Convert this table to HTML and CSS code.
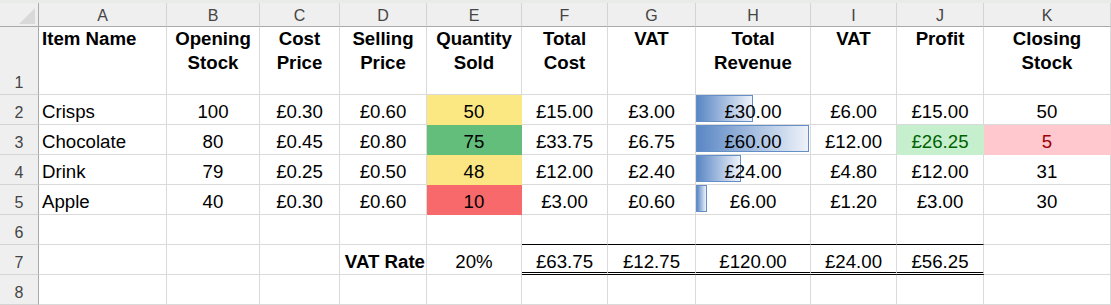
FILE: index.html
```html
<!DOCTYPE html>
<html>
<head>
<meta charset="utf-8">
<link rel="stylesheet" href="styles.css">
</head>
<body>
<div class="strip"></div>
<div class="sheet">
  <div class="corner"><span class="tri"></span></div>
  <div class="ch">A</div><div class="ch">B</div><div class="ch">C</div><div class="ch">D</div><div class="ch">E</div><div class="ch">F</div><div class="ch">G</div><div class="ch">H</div><div class="ch">I</div><div class="ch">J</div><div class="ch last">K</div>

  <div class="rh">1</div>
  <div class="c hd left">Item Name</div>
  <div class="c hd">Opening<br>Stock</div>
  <div class="c hd">Cost<br>Price</div>
  <div class="c hd">Selling<br>Price</div>
  <div class="c hd">Quantity<br>Sold</div>
  <div class="c hd">Total<br>Cost</div>
  <div class="c hd">VAT</div>
  <div class="c hd">Total<br>Revenue</div>
  <div class="c hd">VAT</div>
  <div class="c hd">Profit</div>
  <div class="c hd">Closing<br>Stock</div>

  <div class="rh">2</div>
  <div class="c left">Crisps</div>
  <div class="c">100</div>
  <div class="c">£0.30</div>
  <div class="c">£0.60</div>
  <div class="c yellow">50</div>
  <div class="c">£15.00</div>
  <div class="c">£3.00</div>
  <div class="c barcell"><span class="bar" style="width:57px"></span><span class="val">£30.00</span></div>
  <div class="c">£6.00</div>
  <div class="c">£15.00</div>
  <div class="c">50</div>

  <div class="rh">3</div>
  <div class="c left">Chocolate</div>
  <div class="c">80</div>
  <div class="c">£0.45</div>
  <div class="c">£0.80</div>
  <div class="c green">75</div>
  <div class="c">£33.75</div>
  <div class="c">£6.75</div>
  <div class="c barcell"><span class="bar" style="width:113px"></span><span class="val">£60.00</span></div>
  <div class="c">£12.00</div>
  <div class="c good">£26.25</div>
  <div class="c bad">5</div>

  <div class="rh">4</div>
  <div class="c left">Drink</div>
  <div class="c">79</div>
  <div class="c">£0.25</div>
  <div class="c">£0.50</div>
  <div class="c yellow2">48</div>
  <div class="c">£12.00</div>
  <div class="c">£2.40</div>
  <div class="c barcell"><span class="bar" style="width:45px"></span><span class="val">£24.00</span></div>
  <div class="c">£4.80</div>
  <div class="c">£12.00</div>
  <div class="c">31</div>

  <div class="rh">5</div>
  <div class="c left">Apple</div>
  <div class="c">40</div>
  <div class="c">£0.30</div>
  <div class="c">£0.60</div>
  <div class="c red">10</div>
  <div class="c">£3.00</div>
  <div class="c">£0.60</div>
  <div class="c barcell"><span class="bar" style="width:11px"></span><span class="val">£6.00</span></div>
  <div class="c">£1.20</div>
  <div class="c">£3.00</div>
  <div class="c">30</div>

  <div class="rh">6</div>
  <div class="c"></div><div class="c"></div><div class="c"></div><div class="c"></div><div class="c"></div>
  <div class="c topline"></div><div class="c topline"></div><div class="c topline"></div><div class="c topline"></div><div class="c topline"></div>
  <div class="c"></div>

  <div class="rh">7</div>
  <div class="c"></div><div class="c"></div>
  <div class="c"></div>
  <div class="c bold right">VAT Rate</div>
  <div class="c">20%</div>
  <div class="c total">£63.75</div>
  <div class="c total">£12.75</div>
  <div class="c total">£120.00</div>
  <div class="c total">£24.00</div>
  <div class="c total">£56.25</div>
  <div class="c"></div>

  <div class="rh">8</div>
  <div class="c"></div><div class="c"></div><div class="c"></div><div class="c"></div><div class="c"></div><div class="c"></div><div class="c"></div><div class="c"></div><div class="c"></div><div class="c"></div><div class="c"></div>
</div>
</body>
</html>
```

FILE: styles.css
```css
html, body {
  margin: 0;
  padding: 0;
  background: #ffffff;
}

body {
  font-family: "Liberation Sans", Arial, sans-serif;
  width: 1111px;
  height: 305px;
  overflow: hidden;
}

.strip {
  height: 3px;
  background: #e8ece8;
}

.sheet {
  display: grid;
  grid-template-columns: 39px 128px 93px 80px 87px 95px 86px 88px 115px 86px 87px 127px;
  grid-template-rows: 24px 68px repeat(7, 30px);
}

.sheet > div {
  box-sizing: border-box;
}

.corner {
  background: #efefef;
  border-right: 1px solid #a9a9a9;
  border-bottom: 1px solid #a9a9a9;
  display: flex;
  justify-content: flex-end;
  align-items: flex-end;
  padding: 0 3px 2px 0;
}

.tri {
  width: 16px;
  height: 16px;
  background: #d9d9d9;
  clip-path: polygon(100% 0, 100% 100%, 0 100%);
}

.ch {
  background: #efefef;
  border-right: 1px solid #d4d4d4;
  border-bottom: 1px solid #a9a9a9;
  color: #444444;
  font-size: 16px;
  display: flex;
  justify-content: center;
  align-items: flex-end;
  line-height: 18px;
  padding-bottom: 1px;
}

.ch.last {
  border-right: 1px solid #d4d4d4;
}

.rh {
  background: #efefef;
  border-right: 1px solid #a9a9a9;
  border-bottom: 1px solid #d4d4d4;
  color: #444444;
  font-size: 16px;
  display: flex;
  justify-content: center;
  align-items: flex-end;
  line-height: 18px;
  padding-bottom: 2px;
}

.c {
  border-right: 1px solid #dadada;
  border-bottom: 1px solid #dadada;
  font-size: 18.67px;
  color: #000000;
  display: flex;
  justify-content: center;
  align-items: flex-end;
  line-height: 21px;
  padding: 0 3px 2px 3px;
  white-space: nowrap;
  position: relative;
}

.c.left {
  justify-content: flex-start;
  padding-left: 3px;
}

.c.right {
  justify-content: flex-end;
  padding-right: 1px;
}

.c.bold {
  font-weight: bold;
}

.c.hd {
  font-weight: bold;
  align-items: flex-start;
  text-align: center;
  line-height: 24.3px;
  padding-top: 0;
  padding-bottom: 0;
}

.c.hd.left {
  text-align: left;
}

.yellow {
  background: #fce883;
  border-color: #fce883 !important;
}

.yellow2 {
  background: #fce683;
  border-color: #fce683 !important;
}

.green {
  background: #63be7b;
  border-color: #63be7b !important;
}

.red {
  background: #f8696b;
  border-color: #f8696b !important;
}

.good {
  background: #c6efce;
  border-color: #c6efce !important;
  color: #006100;
}

.bad {
  background: #ffc7ce;
  border-color: #ffc7ce !important;
  color: #9c0006;
}

.barcell .bar {
  position: absolute;
  left: 0;
  top: 0;
  height: 27px;
  box-sizing: border-box;
  border: 1px solid #638ec6;
  background: linear-gradient(90deg, #5a87c5 0%, #eef2f9 100%);
}

.barcell .val {
  position: relative;
}

.topline {
  border-bottom: 1px solid #000000;
}

.total {
  border-bottom: 3px double #000000;
  padding-bottom: 0;
}
```
